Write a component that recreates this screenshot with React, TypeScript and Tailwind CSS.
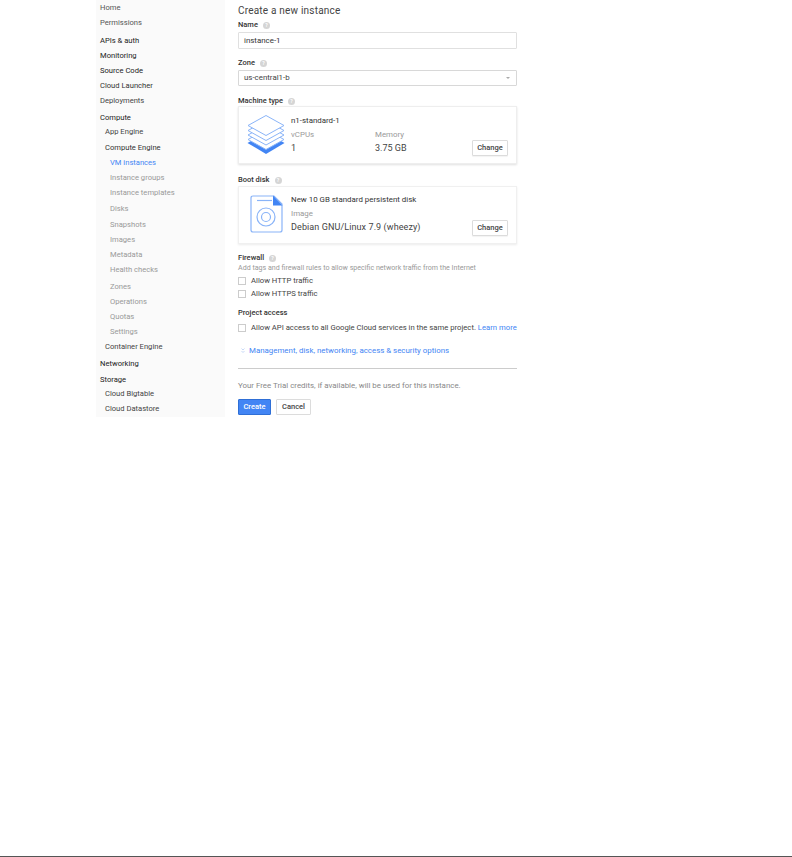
import React from "react";

type NavItem = { label: string; level: 0 | 1 | 2; tone: string; mt?: string };

const nav: NavItem[] = [
  { label: "Home", level: 0, tone: "text-[#555]" },
  { label: "Permissions", level: 0, tone: "text-[#555]" },
  { label: "APIs & auth", level: 0, tone: "text-[#222]", mt: "mt-[3px]" },
  { label: "Monitoring", level: 0, tone: "text-[#222]" },
  { label: "Source Code", level: 0, tone: "text-[#222]" },
  { label: "Cloud Launcher", level: 0, tone: "text-[#333]" },
  { label: "Deployments", level: 0, tone: "text-[#444]" },
  { label: "Compute", level: 0, tone: "text-[#222]", mt: "mt-[2px]" },
  { label: "App Engine", level: 1, tone: "text-[#444]", mt: "-mt-px" },
  { label: "Compute Engine", level: 1, tone: "text-[#333]", mt: "mt-px" },
  { label: "VM instances", level: 2, tone: "text-[#4285f4]" },
  { label: "Instance groups", level: 2, tone: "text-[#999]" },
  { label: "Instance templates", level: 2, tone: "text-[#999]" },
  { label: "Disks", level: 2, tone: "text-[#999]", mt: "mt-px" },
  { label: "Snapshots", level: 2, tone: "text-[#999]", mt: "mt-px" },
  { label: "Images", level: 2, tone: "text-[#999]" },
  { label: "Metadata", level: 2, tone: "text-[#999]" },
  { label: "Health checks", level: 2, tone: "text-[#999]" },
  { label: "Zones", level: 2, tone: "text-[#999]", mt: "mt-[2px]" },
  { label: "Operations", level: 2, tone: "text-[#999]" },
  { label: "Quotas", level: 2, tone: "text-[#999]" },
  { label: "Settings", level: 2, tone: "text-[#999]" },
  { label: "Container Engine", level: 1, tone: "text-[#444]" },
  { label: "Networking", level: 0, tone: "text-[#222]", mt: "mt-[2px]" },
  { label: "Storage", level: 0, tone: "text-[#222]", mt: "mt-px" },
  { label: "Cloud Bigtable", level: 1, tone: "text-[#444]", mt: "-mt-px" },
  { label: "Cloud Datastore", level: 1, tone: "text-[#444]" },
];

const indent = { 0: "pl-1", 1: "pl-[9px]", 2: "pl-[14px]" };

function Help() {
  return (
    <span className="inline-flex h-[7px] w-[7px] items-center justify-center rounded-full bg-[#d5d5d5] text-[5px] leading-none font-bold text-white">
      ?
    </span>
  );
}

function Label({ text, help = true }: { text: string; help?: boolean }) {
  return (
    <div className="flex h-[12px] items-center gap-[5px] text-[7.5px] font-medium text-[#333]">
      {text}
      {help && <Help />}
    </div>
  );
}

function Stack() {
  return (
    <svg width="38" height="39" viewBox="0 0 38 39" fill="none">
      <path d="M0.5 28 L19 17 L37.5 28 L19 39 Z" fill="#4285f4" />
      <g stroke="#8ab4f8" strokeWidth="1" fill="#fff" strokeLinejoin="round">
        <path d="M1 24.5 L19 14.5 L37 24.5 L19 34.5 Z" />
        <path d="M1 20 L19 10 L37 20 L19 30 Z" />
        <path d="M1 15.5 L19 5.5 L37 15.5 L19 25.5 Z" />
        <path d="M1 10.5 L19 0.5 L37 10.5 L19 20.5 Z" />
      </g>
    </svg>
  );
}

function Disk() {
  return (
    <svg width="33" height="38" viewBox="0 0 33 38" fill="none">
      <path d="M3 1 H24 L32 9 V35 Q32 37 30 37 H3 Q1 37 1 35 V3 Q1 1 3 1 Z" stroke="#8ab4f8" strokeWidth="1.2" />
      <path d="M23 0.5 L32.5 10.5 H23 Z" fill="#4285f4" />
      <path d="M7 5.5 H22" stroke="#8ab4f8" strokeWidth="1.2" />
      <circle cx="16" cy="22" r="9" stroke="#8ab4f8" strokeWidth="1.2" />
      <circle cx="16" cy="22" r="4.5" stroke="#8ab4f8" strokeWidth="1.2" />
    </svg>
  );
}

function ChangeButton() {
  return (
    <button className="flex h-[16px] w-[36px] items-center justify-center rounded-[1px] border border-[#dcdcdc] bg-white text-[7.5px] font-medium text-[#444] shadow-[0_1px_1px_rgba(0,0,0,0.05)]">
      Change
    </button>
  );
}

function Check({ label }: { label: React.ReactNode }) {
  return (
    <div className="flex h-[13px] items-center gap-[5px] text-[7.7px] whitespace-nowrap text-[#444]">
      <span className="h-[8px] w-[8px] shrink-0 border border-[#ccc] bg-white" />
      <span>{label}</span>
    </div>
  );
}

export default function App() {
  return (
    <div className="flex h-[857px] w-[792px] flex-col border-b border-[#555] bg-white font-['Roboto',sans-serif]">
      <div className="ml-[96px] flex h-[417px]">
        <nav className="w-[129px] bg-[#fafafa]">
          {nav.map((n) => (
            <div
              key={n.label}
              className={`h-[15px] text-[7.6px] leading-[15px] whitespace-nowrap ${indent[n.level]} ${n.tone} ${n.mt ?? ""}`}
            >
              {n.label}
            </div>
          ))}
        </nav>

        <main className="ml-[13px] w-[279px]">
          <h1 className="pt-[4px] text-[10px] leading-[13px] tracking-[0.2px] text-[#444]">Create a new instance</h1>
          <div className="mt-[2px]">
            <Label text="Name" />
          </div>
          <div className="mt-[1px] flex h-[17px] items-center rounded-[1px] border border-[#e0e0e0] px-[5px] text-[7.9px] text-[#333]">
            instance-1
          </div>

          <div className="mt-[8px]">
            <Label text="Zone" />
          </div>
          <div className="mt-[1px] flex h-[16px] items-center justify-between rounded-[1px] border border-[#d8d8d8] pr-[6px] pl-[5px] text-[7.9px] text-[#444]">
            us-central1-b
            <span className="h-0 w-0 border-x-[2px] border-t-[2px] border-x-transparent border-t-[#aaa]" />
          </div>

          <div className="mt-[9px]">
            <Label text="Machine type" />
          </div>
          <section className="-mt-px flex h-[58px] border border-[#eee] shadow-[0_1px_2px_rgba(0,0,0,0.12)]">
            <div className="mt-[8px] ml-[8px] w-[44px]">
              <Stack />
            </div>
            <div className="flex-1 pt-[8px]">
              <div className="text-[7.9px] leading-[12px] text-[#333]">n1-standard-1</div>
              <div className="mt-[2px] flex">
                <div className="w-[84px]">
                  <div className="text-[7.9px] leading-[12px] text-[#999]">vCPUs</div>
                  <div className="mt-[1px] text-[9px] leading-[12px] text-[#444]">1</div>
                </div>
                <div>
                  <div className="text-[7.9px] leading-[12px] text-[#999]">Memory</div>
                  <div className="mt-[1px] text-[9px] leading-[12px] text-[#444]">3.75 GB</div>
                </div>
              </div>
            </div>
            <div className="mr-[8px] flex items-end pb-[7px]">
              <ChangeButton />
            </div>
          </section>

          <div className="mt-[10px]">
            <Label text="Boot disk" />
          </div>
          <section className="flex h-[58px] border border-[#f0f0f0] shadow-[0_1px_2px_rgba(0,0,0,0.08)]">
            <div className="mt-[8px] ml-[11px] w-[41px]">
              <Disk />
            </div>
            <div className="flex-1 pt-[7px]">
              <div className="text-[7.9px] leading-[12px] text-[#333]">New 10 GB standard persistent disk</div>
              <div className="mt-[2px] text-[7.9px] leading-[12px] text-[#999]">Image</div>
              <div className="mt-[1px] text-[9px] leading-[12px] tracking-[0.1px] whitespace-nowrap text-[#444]">Debian GNU/Linux 7.9 (wheezy)</div>
            </div>
            <div className="mr-[8px] flex items-end pb-[7px]">
              <ChangeButton />
            </div>
          </section>

          <div className="mt-[8px]">
            <Label text="Firewall" />
          </div>
          <p className="-mt-[1px] text-[7.1px] leading-[9px] whitespace-nowrap text-[#999]">Add tags and firewall rules to allow specific network traffic from the Internet</p>
          <div className="mt-[2px]">
            <Check label="Allow HTTP traffic" />
            <Check label="Allow HTTPS traffic" />
          </div>

          <div className="mt-[7px]">
            <Label text="Project access" help={false} />
          </div>
          <div className="mt-[2px]">
            <Check
              label={
                <>
                  Allow API access to all Google Cloud services in the same project.{" "}
                  <span className="text-[#4285f4]">Learn more</span>
                </>
              }
            />
          </div>

          <div className="mt-[11px] flex h-[12px] items-center gap-[4px] pl-[3px] text-[7.9px] whitespace-nowrap text-[#4285f4]">
            <svg width="4" height="6" viewBox="0 0 4 6" fill="none" stroke="#b9cff5" strokeWidth="0.8">
              <path d="M0.5 0.5 L2 2 L3.5 0.5 M0.5 3 L2 4.5 L3.5 3" />
            </svg>
            Management, disk, networking, access &amp; security options
          </div>

          <div className="mt-[11px] border-t border-[#ccc]" />
          <p className="mt-[12px] text-[7.9px] leading-[9px] text-[#888]">Your Free Trial credits, if available, will be used for this instance.</p>

          <div className="mt-[9px] flex gap-[5px]">
            <button className="flex h-[16px] w-[33px] items-center justify-center rounded-[1px] border border-[#2f6fd6] bg-[#4285f4] text-[7.5px] font-medium text-white">
              Create
            </button>
            <button className="flex h-[16px] w-[35px] items-center justify-center rounded-[1px] border border-[#dcdcdc] bg-white text-[7.5px] font-medium text-[#444]">
              Cancel
            </button>
          </div>
        </main>
      </div>
    </div>
  );
}
